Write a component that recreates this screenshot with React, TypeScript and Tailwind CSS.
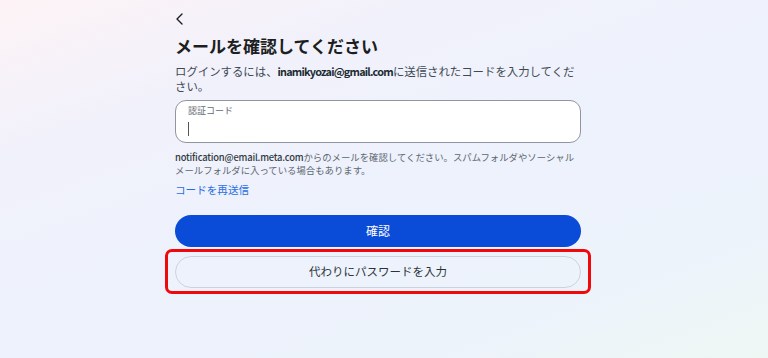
import * as React from "react";

function BackIcon() {
    return (
        <svg width="9" height="12" viewBox="0 0 9 12" fill="none" className="block">
            <path d="M7 1 L2 6 L7 11" stroke="#1c1e21" strokeWidth="1.4" strokeLinecap="round" strokeLinejoin="round" />
        </svg>
    );
}

export default function App() {
    return (
        <div
            className="w-full h-[358px] overflow-hidden bg-[linear-gradient(160deg,#fdf3f6_0%,#f1f1fb_25%,#edf2fc_55%,#edf3fb_80%,#eef7f4_100%)]"
            style={{ fontFamily: '"Noto Sans CJK JP", "Noto Sans", sans-serif' }}
        >
            <div className="w-[406px] ml-[175px] pt-[13px] flex flex-col">
                <BackIcon />

                <h1 className="mt-[10px] text-[17px] leading-[22px] font-bold text-[#1c1e21]">
                    メールを確認してください
                </h1>

                <p className="mt-[7px] text-[11.4px] leading-[15px] text-[#3e4a53]">
                    ログインするには、
                    <span className="font-bold text-[#1c2b33] text-[10.8px] tracking-[-0.07em]">inamikyozai@gmail.com</span>
                    に送信されたコードを入力してください。
                </p>

                <div className="mt-[6px] h-[43px] bg-white border border-[#8f969f] rounded-[11px] px-[12px] pt-[3px] flex flex-col">
                    <span className="text-[9px] leading-[14px] text-[#646a71]">認証コード</span>
                    <span className="mt-[4px] block w-px h-[14px] bg-[#555]" />
                </div>

                <p className="mt-[8px] text-[9.4px] leading-[13px] text-[#5d6770]">
                    <span className="text-[#2f3a42] font-medium tracking-[-0.02em]">notification@email.meta.com</span>
                    からのメールを確認してください。スパムフォルダやソーシャルメールフォルダに入っている場合もあります。
                </p>

                <a className="mt-[6px] text-[10.6px] leading-[14px] text-[#1f6fe5] w-fit">コードを再送信</a>

                <button className="mt-[18px] h-[32px] w-full rounded-full bg-[#0a4cd8] text-white text-[12px]">
                    確認
                </button>

                <div className="relative mt-[9px]">
                    <button className="h-[32px] w-full rounded-full border border-[#cdd3dc] text-[#2b3339] text-[11.5px]">
                        代わりにパスワードを入力
                    </button>
                    <div className="absolute -left-[10px] -right-[10px] -top-[7px] -bottom-[6px] border-[3px] border-[#f0090b] rounded-[7px] pointer-events-none" />
                </div>
            </div>
        </div>
    );
}
